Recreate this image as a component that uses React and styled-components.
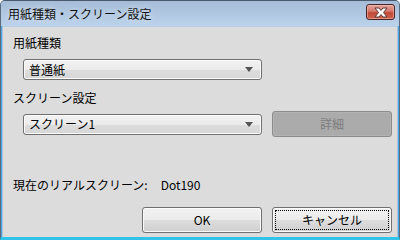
import styled, { createGlobalStyle } from "styled-components";

const GlobalStyle = createGlobalStyle`
  html, body {
    margin: 0;
    padding: 0;
    background: #ffffff;
  }
  body {
    font-family: "Noto Sans CJK JP", "Noto Sans", sans-serif;
    font-size: 12px;
    color: #000;
  }
`;

function App() {
  return (
    <>
      <GlobalStyle />
      <Window>
        <TitleBar>
          <Title>用紙種類・スクリーン設定</Title>
          <CloseButton>
            <svg width="16" height="11" viewBox="0 0 16 11">
              <path
                d="M2 1 H6 L8 3.5 L10 1 H14 L10.5 5.5 L14 10 H10 L8 7.5 L6 10 H2 L5.5 5.5 Z"
                fill="#ffffff"
                stroke="#5a3a3a"
                strokeWidth="1"
                strokeLinejoin="round"
              />
            </svg>
          </CloseButton>
        </TitleBar>
        <Body>
          <Label $top={8}>用紙種類</Label>
          <Row $top={8} $height={21}>
            <Combo>
              <span>普通紙</span>
              <Arrow />
            </Combo>
          </Row>
          <Label $top={10}>スクリーン設定</Label>
          <Row $top={5} $height={26}>
            <Combo>
              <span>スクリーン1</span>
              <Arrow />
            </Combo>
            <Button disabled>詳細</Button>
          </Row>
          <Status>
            <span>現在のリアルスクリーン:</span>
            <span>Dot190</span>
          </Status>
          <Footer>
            <Button>OK</Button>
            <Button $focused>
              キャンセル
            </Button>
          </Footer>
        </Body>
      </Window>
    </>
  );
}

export default App;

const Window = styled.div`
  width: 400px;
  height: 240px;
  box-sizing: border-box;
  display: flex;
  flex-direction: column;
  border: 1px solid #5b6b7e;
  border-top-color: #4a5a6e;
  border-bottom: 3px solid #2fc4e8;
  border-radius: 5px 5px 0 0;
  background: #a9c3de;
  padding: 0 2px 0 2px;
  box-shadow: inset 1px 0 0 #4ea4de, inset -1px 0 0 #4ea4de;
  overflow: hidden;
`;

const TitleBar = styled.div`
  height: 25px;
  flex: none;
  display: flex;
  align-items: center;
  justify-content: space-between;
  padding: 0 3px 0 5px;
  background: linear-gradient(180deg, #a6bcd7 0%, #b2c9e3 60%, #bcd3ec 100%);
  margin: 0 -2px;
  padding-left: 7px;
  padding-right: 4px;
`;

const Title = styled.div`
  font-size: 12px;
  line-height: 14px;
  color: #111;
  text-shadow: 0 0 6px rgba(255, 255, 255, 0.7);
  margin-top: 1px;
`;

const CloseButton = styled.div`
  width: 29px;
  height: 16px;
  box-sizing: border-box;
  border: 1px solid #4a2525;
  border-radius: 3px;
  background: linear-gradient(180deg, #e4a49a 0%, #d5776a 45%, #c24a38 55%, #c9604d 100%);
  box-shadow: inset 0 0 0 1px rgba(255, 200, 190, 0.5);
  display: flex;
  align-items: center;
  justify-content: center;
  margin-top: -3px;
`;

const Body = styled.div`
  flex: 1;
  display: flex;
  flex-direction: column;
  background: #dcdcdc;
  padding: 0 5px 0 10px;
  border-top: 1px solid #b9cfe7;
`;

const Label = styled.div`
  margin-top: ${(p) => p.$top}px;
  height: 16px;
  line-height: 16px;
`;

const Row = styled.div`
  margin-top: ${(p) => p.$top}px;
  height: ${(p) => p.$height}px;
  display: flex;
  align-items: center;
  gap: 10px;
  padding-left: 10px;
`;

const Combo = styled.div`
  width: 239px;
  height: 21px;
  box-sizing: border-box;
  border: 1px solid #707070;
  border-radius: 3px;
  background: linear-gradient(180deg, #f2f2f2 0%, #ebebeb 50%, #dddddd 51%, #d6d6d6 100%);
  box-shadow: inset 0 0 0 1px #fcfcfc;
  display: flex;
  align-items: center;
  justify-content: space-between;
  padding: 0 8px 0 5px;
  line-height: 16px;
`;

const Arrow = styled.div`
  width: 0;
  height: 0;
  border-left: 4px solid transparent;
  border-right: 4px solid transparent;
  border-top: 5px solid #555;
`;

const Button = styled.div`
  width: 120px;
  height: 26px;
  box-sizing: border-box;
  border: 1px solid ${(p) => (p.disabled ? "#8c8c8c" : "#707070")};
  border-radius: 3px;
  background: ${(p) =>
    p.disabled
      ? "#ababab"
      : "linear-gradient(180deg, #f2f2f2 0%, #ebebeb 50%, #dddddd 51%, #cfcfcf 100%)"};
  box-shadow: inset 0 0 0 1px ${(p) => (p.disabled ? "#b2b2b2" : "#fbfbfb")};
  color: ${(p) => (p.disabled ? "#7d7d7d" : "#000")};
  display: flex;
  align-items: center;
  justify-content: center;
  position: relative;
  line-height: 16px;

  &::after {
    content: "";
    display: ${(p) => (p.$focused ? "block" : "none")};
    position: absolute;
    inset: 2px;
    border: 1px dotted #000;
  }
`;

const Status = styled.div`
  margin-top: 40px;
  height: 16px;
  line-height: 16px;
  display: flex;
  gap: 13px;
`;

const Footer = styled.div`
  margin-top: 14px;
  display: flex;
  justify-content: flex-end;
  gap: 10px;
`;
